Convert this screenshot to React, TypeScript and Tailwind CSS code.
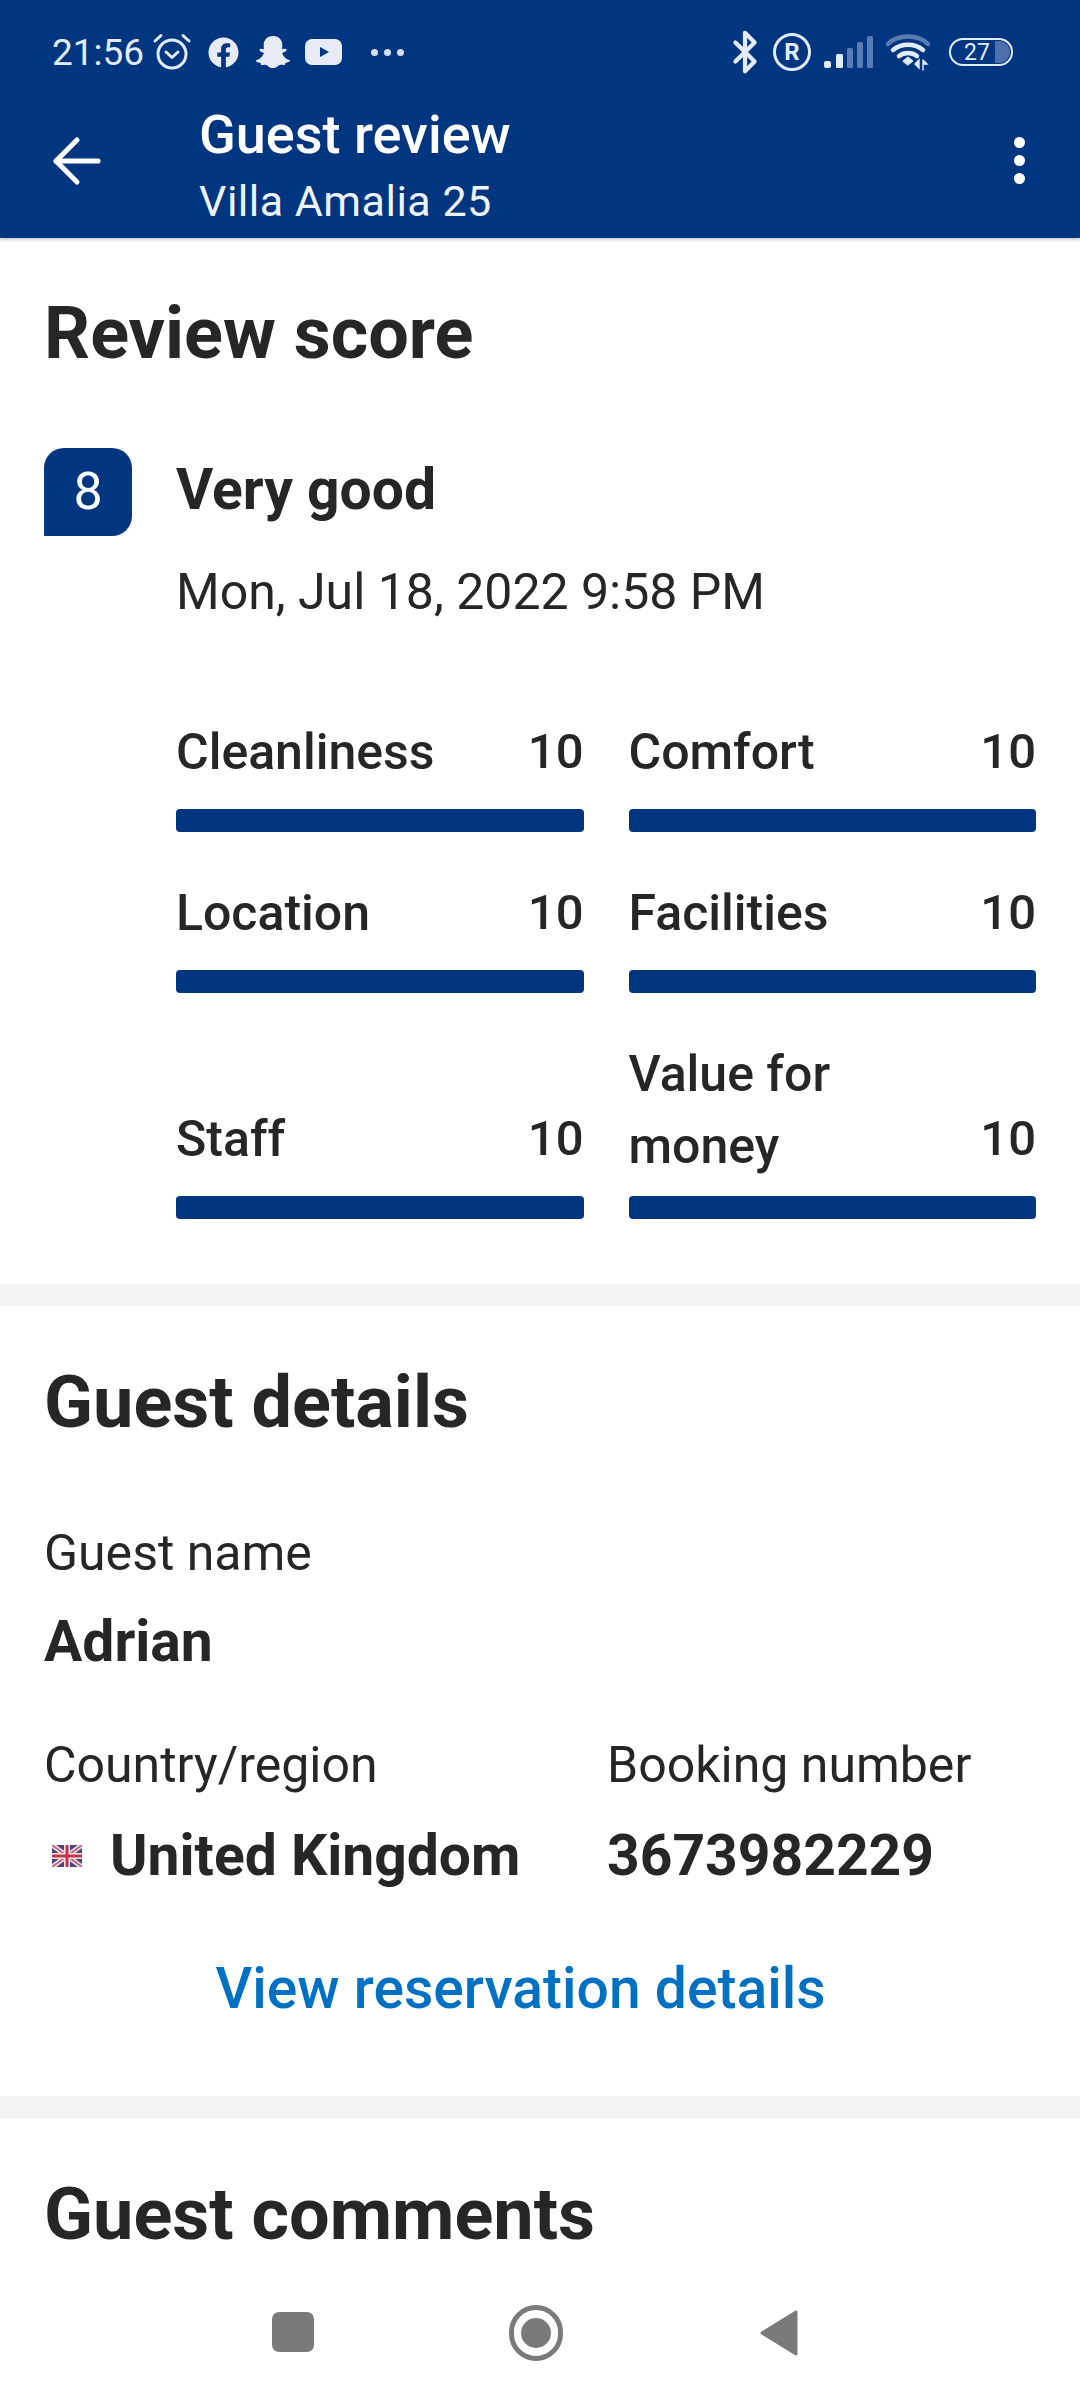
import { ArrowLeft, Bluetooth } from "lucide-react";
import { FaFacebook, FaSnapchatGhost } from "react-icons/fa";

const scores = [
  { label: "Cleanliness", value: "10" },
  { label: "Comfort", value: "10" },
  { label: "Location", value: "10" },
  { label: "Facilities", value: "10" },
  { label: "Staff", value: "10", tight: true, raised: true },
  { label: "Value for money", value: "10", tight: true },
];

function AlarmIcon() {
  return (
    <svg viewBox="0 0 40 40" className="w-[40px] h-[40px]" fill="none" stroke="#e3ecf8" strokeWidth="3" strokeLinecap="round" strokeLinejoin="round">
      <circle cx="20" cy="22" r="14" />
      <path d="M14 20l6 5.5 6-5.5" />
      <path d="M3 9l6-5.5M37 9l-6-5.5" />
    </svg>
  );
}

function YoutubeIcon() {
  return (
    <div className="w-[37px] h-[26px] rounded-[7px] bg-[#e6ebf5] flex items-center justify-center">
      <svg viewBox="0 0 12 12" className="w-[12px] h-[12px]">
        <path d="M2 1L11 6L2 11Z" fill="#003580" />
      </svg>
    </div>
  );
}

function RegisteredIcon() {
  return (
    <div className="w-[38px] h-[38px] rounded-full border-[3.5px] border-[#e3ecf8] flex items-center justify-center text-[24px] leading-none font-bold text-[#e3ecf8]">
      R
    </div>
  );
}

function SignalIcon() {
  return (
    <svg viewBox="0 0 49 32" className="w-[49px] h-[32px]">
      <rect x="0" y="25" width="7" height="7" rx="2" fill="#e3ecf8" />
      <rect x="12" y="18" width="7" height="14" rx="1.5" fill="#e3ecf8" />
      <rect x="23" y="12" width="6" height="20" rx="1.5" fill="#5a7cb4" />
      <rect x="33" y="6" width="6" height="26" rx="1.5" fill="#5a7cb4" />
      <rect x="43" y="0" width="6" height="32" rx="1.5" fill="#5a7cb4" />
    </svg>
  );
}

function WifiIcon() {
  return (
    <svg viewBox="0 0 46 38" className="w-[46px] h-[38px]" fill="none" strokeLinecap="round">
      <path d="M3 11C13 1 33 1 43 11" stroke="#5a7cb4" strokeWidth="4.5" />
      <path d="M8 17C16 10 30 10 38 17" stroke="#e3ecf8" strokeWidth="4.5" />
      <path d="M14 23C19 19 27 19 32 23" stroke="#e3ecf8" strokeWidth="4.5" />
      <path d="M18 28l5-4 5 4-5 4z" fill="#e3ecf8" stroke="#e3ecf8" strokeWidth="1" />
      <path d="M34 27v8l-4-4zM38 27v10M38 27l4 4h-4" fill="#e3ecf8" stroke="#e3ecf8" strokeWidth="1.4" />
    </svg>
  );
}

function BatteryIcon() {
  return (
    <div className="w-[64px] h-[28px] rounded-full border-[2.5px] border-[#e3ecf8] flex items-center overflow-hidden relative">
      <span className="text-[23px] leading-none text-[#e3ecf8] ml-[13px]">27</span>
      <div className="absolute right-[1px] top-[1px] bottom-[1px] w-[15px] rounded-r-full bg-[#4d70ab]" />
    </div>
  );
}

function FlagIcon() {
  return (
    <svg viewBox="0 0 30 22" className="w-[30px] h-[22px]">
      <rect width="30" height="22" rx="2" fill="#4a4780" />
      <path d="M0 0L30 22M30 0L0 22" stroke="#e8dfe8" strokeWidth="5" />
      <path d="M0 0L30 22M30 0L0 22" stroke="#c8506a" strokeWidth="1.5" />
      <path d="M15 0V22M0 11H30" stroke="#f2e6ea" strokeWidth="6" />
      <path d="M15 0V22M0 11H30" stroke="#c8324c" strokeWidth="3" />
    </svg>
  );
}

function ScoreCell({ label, value, tight, raised }: { label: string; value: string; tight?: boolean; raised?: boolean }) {
  return (
    <div className="flex flex-col justify-end">
      <div className="flex items-end justify-between">
        <span className={`text-[50px] leading-[72px] font-medium max-w-[240px] ${raised ? "mb-[7px]" : ""}`}>{label}</span>
        <span className={`text-[49px] leading-[72px] font-medium ${tight ? "mb-[7px]" : ""}`}>{value}</span>
      </div>
      <div className={`h-[23px] rounded-[4px] bg-[#003580] ${tight ? "mt-[14px]" : "mt-[21px]"}`} />
    </div>
  );
}

export default function App() {
  return (
    <div className="w-[1080px] h-[2400px] bg-white flex flex-col overflow-hidden text-[#262626] font-['Roboto',sans-serif]">
      {/* Header */}
      <header className="bg-[#003580] h-[238px] shrink-0 shadow-[0_2px_3px_rgba(0,0,0,0.2)] text-white z-10">
        <div className="h-[104px] pl-[52px] pr-[67px] flex items-center justify-between">
          <div className="flex items-center">
            <span className="text-[37px] leading-none text-[#e3ecf8]">21:56</span>
            <div className="ml-[8px]"><AlarmIcon /></div>
            <FaFacebook className="ml-[16px] w-[31px] h-[31px] text-[#e6ebf5]" />
            <FaSnapchatGhost className="ml-[17px] w-[34px] h-[34px] text-[#e6ebf5]" />
            <div className="ml-[15px]"><YoutubeIcon /></div>
            <span className="ml-[29px] flex gap-[6px]">
              <span className="w-[7px] h-[7px] rounded-full bg-[#d7e0f0]" />
              <span className="w-[7px] h-[7px] rounded-full bg-[#d7e0f0]" />
              <span className="w-[7px] h-[7px] rounded-full bg-[#d7e0f0]" />
            </span>
          </div>
          <div className="flex items-center">
            <Bluetooth className="w-[46px] h-[46px] text-[#e3ecf8]" strokeWidth={2.2} />
            <div className="ml-[5px]"><RegisteredIcon /></div>
            <div className="ml-[13px]"><SignalIcon /></div>
            <div className="ml-[12px]"><WifiIcon /></div>
            <div className="ml-[18px]"><BatteryIcon /></div>
          </div>
        </div>
        <div className="flex items-start pl-[41px] pr-[55px] justify-between">
          <ArrowLeft className="mt-[21px] w-[72px] h-[72px]" strokeWidth={1.7} />
          <div className="flex-1 ml-[86px] mt-[1px]">
            <div className="text-[54px] leading-[60px] font-medium">Guest review</div>
            <div className="text-[43px] leading-[50px] mt-[11px] text-[#eef3fa] tracking-[0.5px]">Villa Amalia 25</div>
          </div>
          <div className="mt-[33px] flex flex-col gap-[7px]">
            <span className="w-[11px] h-[11px] rounded-full bg-white" />
            <span className="w-[11px] h-[11px] rounded-full bg-white" />
            <span className="w-[11px] h-[11px] rounded-full bg-white" />
          </div>
        </div>
      </header>

      <main className="flex-1 overflow-hidden">
        {/* Review score */}
        <section className="pl-[44px] pr-[44px] pt-[53px] pb-[65px]">
          <h2 className="text-[72px] leading-[86px] font-bold">Review score</h2>
          <div className="mt-[71px] flex">
            <div className="w-[88px] h-[88px] bg-[#003580] rounded-t-[20px] rounded-br-[20px] text-white text-[52px] flex items-center justify-center shrink-0">
              8
            </div>
            <div className="ml-[44px] flex-1">
              <div className="text-[57px] leading-[72px] font-bold mt-[6px]">Very good</div>
              <div className="text-[50px] leading-[62px] mt-[35px]">Mon, Jul 18, 2022 9:58 PM</div>
              <div className="grid grid-cols-2 gap-x-[45px] gap-y-[45px] mt-[93px]">
                {scores.map((score) => (
                  <ScoreCell key={score.label} label={score.label} value={score.value} tight={score.tight} raised={score.raised} />
                ))}
              </div>
            </div>
          </div>
        </section>

        <div className="h-[22px] bg-[#f2f2f2]" />

        {/* Guest details */}
        <section className="pl-[44px] pr-[44px] pt-[54px] pb-[76px]">
          <h2 className="text-[72px] leading-[86px] font-bold">Guest details</h2>
          <div className="mt-[76px] text-[50px] leading-[62px]">Guest name</div>
          <div className="mt-[27px] text-[57px] leading-[62px] font-bold">Adrian</div>
          <div className="mt-[61px] grid grid-cols-[563px_1fr]">
            <div>
              <div className="text-[50px] leading-[62px]">Country/region</div>
              <div className="mt-[29px] flex items-center pl-[8px]">
                <FlagIcon />
                <span className="ml-[28px] text-[57px] leading-[62px] font-bold">United Kingdom</span>
              </div>
            </div>
            <div>
              <div className="text-[50px] leading-[62px]">Booking number</div>
              <div className="mt-[29px] text-[57px] leading-[62px] font-bold">3673982229</div>
            </div>
          </div>
          <div className="mt-[71px] text-center text-[57px] leading-[62px] font-medium text-[#0071c2] pr-[39px]">
            View reservation details
          </div>
        </section>

        <div className="h-[22px] bg-[#f2f2f2]" />

        {/* Guest comments */}
        <section className="pl-[44px] pr-[44px] pt-[54px]">
          <h2 className="text-[72px] leading-[86px] font-bold">Guest comments</h2>
        </section>
      </main>

      {/* Android nav bar */}
      <nav className="h-[110px] bg-white shrink-0 flex items-start relative">
        <div className="ml-[272px] mt-[22px] w-[42px] h-[40px] rounded-[7px] bg-[#7a7a7a]" />
        <div className="ml-[195px] mt-[15px] w-[54px] h-[56px] rounded-full border-[5px] border-[#7a7a7a] flex items-center justify-center">
          <div className="w-[30px] h-[30px] rounded-full bg-[#7a7a7a]" />
        </div>
        <svg viewBox="0 0 40 48" className="ml-[196px] mt-[19px] w-[40px] h-[48px]">
          <path d="M37 3L3 24L37 45Z" fill="#7a7a7a" stroke="#7a7a7a" strokeWidth="3" strokeLinejoin="round" />
        </svg>
      </nav>
    </div>
  );
}
